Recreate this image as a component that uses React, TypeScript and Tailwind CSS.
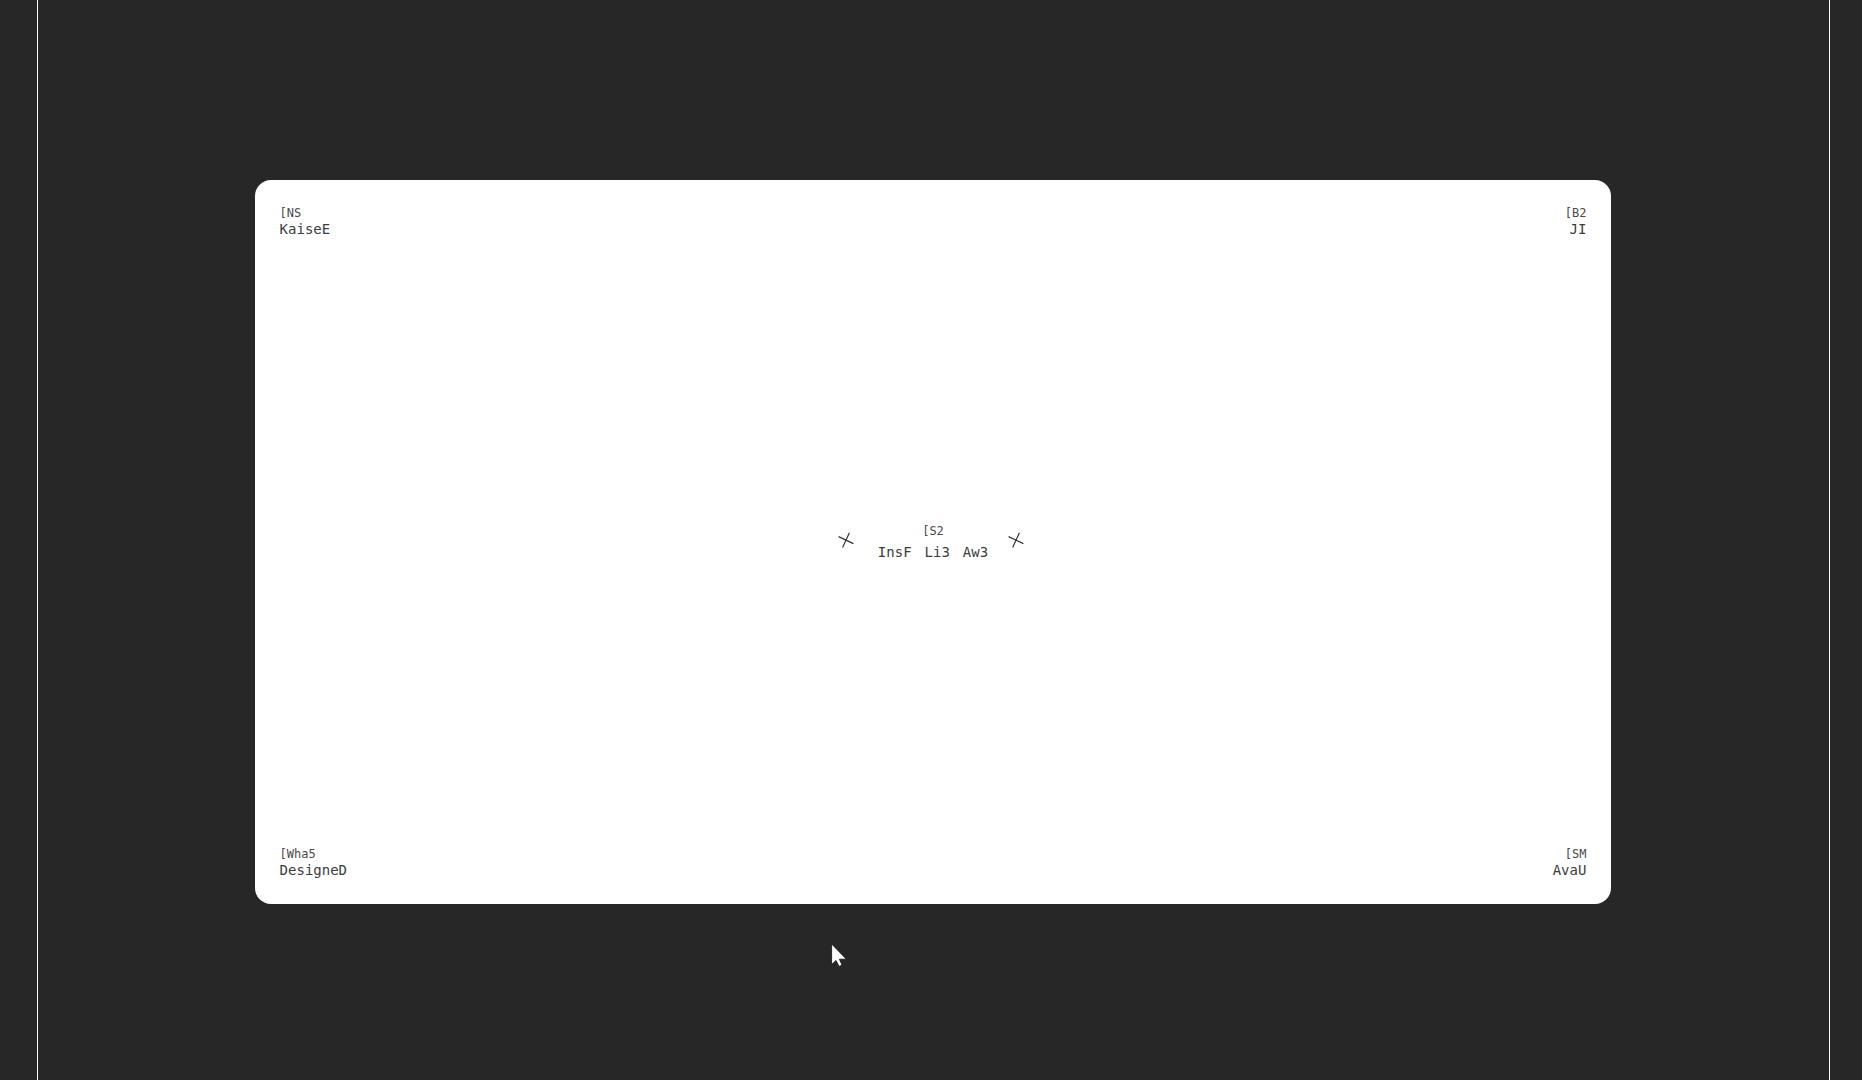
import React from 'react';

type LabelProps = {
  title: string;
  value: string;
  align?: 'left' | 'right';
};

const Label = ({ title, value, align = 'left' }: LabelProps) => (
  <div className={align === 'right' ? 'text-right' : 'text-left'}>
    <p className="text-[12px] leading-4 text-[#4a4a4a]">{title}</p>
    <p className="text-[14px] leading-[17px]">{value}</p>
  </div>
);

const Cross = () => (
  <svg
    className="w-4 h-4 mb-1 shrink-0"
    viewBox="0 0 16 16"
    fill="none"
    stroke="#333333"
    strokeWidth="1.2"
    aria-hidden="true"
  >
    <path d="M0.6 4.6 15.4 11.6M11.4 0.8 4.6 15.4" />
  </svg>
);

const Cursor = () => (
  <svg
    className="absolute left-[831px] top-[943px] w-4 h-6"
    viewBox="0 0 16 24"
    fill="#ffffff"
    stroke="#111111"
    strokeWidth="0.8"
    aria-hidden="true"
  >
    <path d="M0.6 1V21.6L5 17.4 8 23.4 11 22 8.4 16.2H15.4Z" />
  </svg>
);

const words = ['InsF', 'Li3', 'Aw3'];

const App = () => {
  return (
    <div className="relative min-h-screen bg-[#272727] pl-[37px] pr-8 flex">
      <main className="flex-1 border-x border-white flex items-center justify-center pr-px">
        <section className="w-[75.8%] aspect-[1357/724] mt-1 rounded-2xl bg-white px-[25px] py-[25px] flex flex-col justify-between font-['DejaVu_Sans_Mono',monospace] text-[#3c3c3c]">
          <div className="flex justify-between">
            <Label title="[NS" value="KaiseE" />
            <Label title="[B2" value="JI" align="right" />
          </div>

          <div className="flex items-center justify-center pr-1">
            <Cross />
            <div className="ml-6 mr-5 text-center">
              <p className="text-[12px] leading-5 text-[#4a4a4a]">[S2</p>
              <p className="text-[14px] leading-[22px] flex gap-[13px]">
                {words.map((word) => (
                  <span key={word}>{word}</span>
                ))}
              </p>
            </div>
            <Cross />
          </div>

          <div className="flex justify-between">
            <Label title="[Wha5" value="DesigneD" />
            <Label title="[SM" value="AvaU" align="right" />
          </div>
        </section>
      </main>
      <Cursor />
    </div>
  );
};

export default App;
